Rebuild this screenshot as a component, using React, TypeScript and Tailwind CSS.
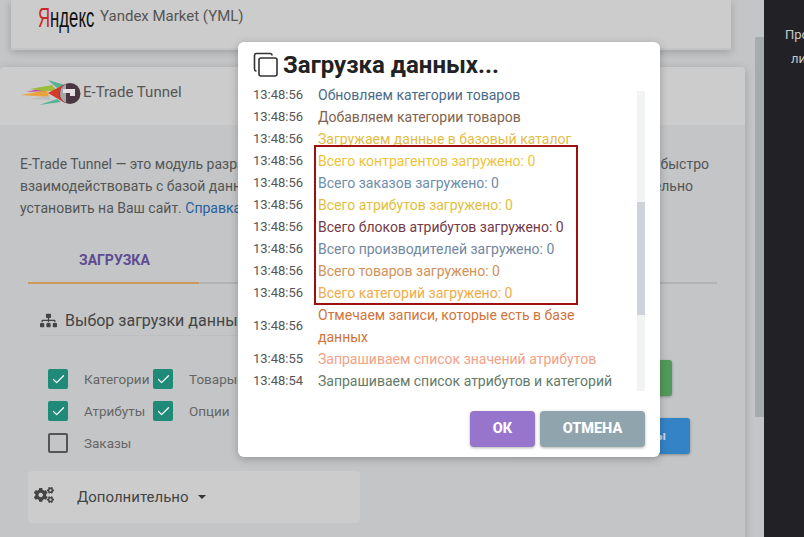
import { Check } from "lucide-react";
import { FaCogs, FaSitemap } from "react-icons/fa";

const logRows = [
  { text: "Обновляем категории товаров", color: "text-[#4a6a88]" },
  { text: "Добавляем категории товаров", color: "text-[#7f634c]" },
  { text: "Загружаем данные в базовый каталог", color: "text-[#e3bd45]" },
  { text: "Всего контрагентов загружено: 0", color: "text-[#efc337]" },
  { text: "Всего заказов загружено: 0", color: "text-[#6d8dab]" },
  { text: "Всего атрибутов загружено: 0", color: "text-[#e2c03e]" },
  { text: "Всего блоков атрибутов загружено: 0", color: "text-[#743a46]" },
  { text: "Всего производителей загружено: 0", color: "text-[#7287a1]" },
  { text: "Всего товаров загружено: 0", color: "text-[#d19158]" },
  { text: "Всего категорий загружено: 0", color: "text-[#f1ab4a]" },
  { text: "Отмечаем записи, которые есть в базе данных", color: "text-[#d0743a]" },
  { text: "Запрашиваем список значений атрибутов", color: "text-[#f4a185]", time: "13:48:55" },
  { text: "Запрашиваем список атрибутов и категорий", color: "text-[#637a68]", time: "13:48:54" },
];

function Box({ label, checked, w }: { label: string; checked?: boolean; w: string }) {
  return (
    <div className={`flex items-center h-[32px] ${w}`}>
      {checked ? (
        <span className="flex items-center justify-center w-5 h-5 rounded-[2px] bg-[#1f8a78] text-white">
          <Check size={15} strokeWidth={2} />
        </span>
      ) : (
        <span className="w-5 h-5 rounded-[2px] border-2 border-[#555]" />
      )}
      <span className="ml-4 text-[13.5px] text-[#666]">{label}</span>
    </div>
  );
}

function RocketLogo() {
  return (
    <svg width="60" height="26" viewBox="0 0 60 26" className="shrink-0">
      <path d="M0 15 L26 10 L28 17 Z" fill="#e8a33c" />
      <path d="M5 12 L22 8 L26 11 Z" fill="#c4479c" />
      <path d="M9 9 L31 5 L36 11 L22 11 Z" fill="#9dbb3f" />
      <path d="M8 19 L28 16 L30 20 Z" fill="#bdbdbd" />
      <path d="M18 25 L36 19 L40 22 Z" fill="#55b394" />
      <path d="M27 0 L44 5 L36 8 Z" fill="#55b394" />
      <path d="M27 13 L44 4 L39 13 L44 23 Z" fill="#d6382b" />
      <circle cx="49" cy="13.500" r="10.500" fill="#4a3742" />
      <path d="M39 13.500 A10.500 10.500 0 0 1 45 4 L45 23 A10.500 10.500 0 0 1 39 13.500 Z" fill="#a9a6a8" />
      <path d="M42 9 H54 V16 H49 V13 H42 Z" fill="#e4e0e2" />
    </svg>
  );
}

function CopyIcon() {
  return (
    <svg width="25" height="25" viewBox="0 0 25 25" fill="none" stroke="#333" strokeWidth="1.6" className="shrink-0">
      <path d="M3.500 19 C2.500 19 1.500 18 1.500 17 V3.500 C1.500 2.500 2.500 1.500 3.500 1.500 H17 C18 1.500 19 2.500 19 3.500" />
      <rect x="6" y="6" width="18" height="18" rx="2" />
    </svg>
  );
}

export default function App() {
  return (
    <div className="relative h-[537px] w-[804px] overflow-hidden bg-[#c3c5c7] font-['Roboto',sans-serif]">
      <div className="flex h-full">
        <div className="w-[745px] shrink-0">
          <div className="mx-[11px] w-[720px] h-[50px] bg-[#cccccc] border-b-2 border-[#c4c4c4] shadow-[0_2px_8px_rgba(0,0,0,0.2)] flex items-center pl-[27px] pb-[15px]">
            <span className="inline-block mt-[4px] w-[56px] text-[27px] leading-none font-['Liberation_Sans',sans-serif] text-[#111] origin-left scale-x-[0.62] whitespace-nowrap">
              <span className="text-[#c62a22]">Я</span>ндекс
            </span>
            <span className="ml-[6px] text-[15px] text-[#555]">Yandex Market (YML)</span>
          </div>

          <div className="mt-[17px] h-[480px] rounded-t-[4px] shadow-[0_2px_10px_rgba(0,0,0,0.2)]">
            <div className="h-[58px] bg-[#cccccc] rounded-t-[4px] flex items-center pl-[21px] pb-[7px]">
              <RocketLogo />
              <span className="ml-[2px] text-[15px] text-[#555]">E-Trade Tunnel</span>
            </div>
            <div className="px-5 pt-[28px]">
              <p className="text-[14px] leading-[22px] text-[#555] whitespace-nowrap">
                <span className="flex justify-between w-[689px]">
                  <span>E-Trade Tunnel — это модуль разработанный для того,</span>
                  <span>быстро</span>
                </span>
                <span className="flex justify-between w-[673px]">
                  <span>взаимодействовать с базой данных</span>
                  <span>ельно</span>
                </span>
                <span className="block">
                  установить на Ваш сайт. <span className="text-[#2a5f9e]">Справка</span>
                </span>
              </p>
            </div>

            <div className="mx-7 mt-[18px] flex h-[47px] border-b-2 border-[#b3b3b3]">
              <div className="w-[171px] h-[47px] shrink-0 border-b-2 border-[#c99a5b] pl-[51px] pt-[11px]">
                <span className="text-[14px] font-bold text-[#5e4b92]">ЗАГРУЗКА</span>
              </div>
            </div>

            <div className="flex">
              <div className="w-[332px] ml-7 shrink-0">
                <div className="mt-[25px] flex items-center h-[27px] mx-[12px] border-b border-[#bdbfc1] pb-[3px]">
                  <FaSitemap size={17} className="text-[#444]" />
                  <span className="ml-2 text-[16px] text-[#444] whitespace-nowrap">Выбор загрузки данных</span>
                </div>
                <div className="mt-[27px] ml-5">
                  <div className="flex">
                    <Box label="Категории" checked w="w-[105px]" />
                    <Box label="Товары" checked w="w-[105px]" />
                  </div>
                  <div className="flex">
                    <Box label="Атрибуты" checked w="w-[105px]" />
                    <Box label="Опции" checked w="w-[105px]" />
                  </div>
                  <Box label="Заказы" w="w-[105px]" />
                </div>
                <div className="mt-[12px] h-[52px] rounded-[4px] bg-[#cccccc] flex items-center pl-[7px]">
                  <FaCogs size={20} className="text-[#444] -mt-[4px] -ml-[1px]" />
                  <span className="ml-[23px] text-[15px] text-[#444]">Дополнительно</span>
                  <span className="ml-[9px] w-0 h-0 border-x-[4px] border-x-transparent border-t-[4px] border-t-[#333]" />
                </div>
              </div>
              <div className="flex-1 relative">
                <button className="absolute left-[200px] top-[76px] w-[112px] h-9 rounded-[3px] bg-[#529a5a] shadow-[0_1px_3px_rgba(0,0,0,0.3)]" />
                <button className="absolute left-[150px] top-[134px] w-[180px] h-9 rounded-[3px] bg-[#3483c6] shadow-[0_1px_3px_rgba(0,0,0,0.3)] text-[13px] font-bold text-[#c9d8e8] text-right pr-[24px] whitespace-nowrap">
                  Загрузить товары
                </button>
              </div>
            </div>
          </div>
        </div>

        <div className="ml-[10px] w-[9px] mt-[37px] h-[380px] bg-[#a6acae] shrink-0" />

        <div className="flex-1 bg-[#222226] pl-[21px] pt-[23px] text-[13px] leading-[24px] text-[#c8c8c8] overflow-hidden whitespace-nowrap">
          <div>Про</div>
          <div className="pl-[6px]">ли</div>
        </div>
      </div>

      <div className="absolute left-[238px] top-[42px] w-[422px] h-[415px] rounded-[6px] bg-white shadow-[0_2px_8px_rgba(0,0,0,0.25)] px-[15px]">
        <div className="flex items-center h-[46px] pb-[1px]">
          <CopyIcon />
          <h1 className="ml-[5px] text-[24px] font-bold text-[#222]">Загрузка данных...</h1>
        </div>
        <div className="relative h-[303px] overflow-hidden">
          <div className="-mt-[4px]">
            {logRows.map((row, i) => (
              <div key={i} className="flex items-center min-h-[22px] pr-[30px]">
                <span className="w-[65px] shrink-0 text-[13px] text-[#555]">{row.time ?? "13:48:56"}</span>
                <span className={`text-[14px] leading-[22px] w-[300px] ${row.color}`}>{row.text}</span>
              </div>
            ))}
          </div>
          <div className="absolute right-0 top-[3px] bottom-0 w-2 bg-[#f1f3f5]">
            <div className="mt-[111px] h-[113px] bg-[#cdd3d8]" />
          </div>
          <div className="absolute left-[61px] top-[57px] w-[264px] h-[160px] border-2 border-[#9c1010]" />
        </div>
        <div className="mt-[20px] flex justify-end gap-[5px]">
          <button className="w-[65px] h-9 rounded-[4px] bg-[#9775cd] text-[14.5px] font-extrabold text-white shadow-[0_1px_3px_rgba(0,0,0,0.3)]">ОК</button>
          <button className="w-[105px] h-9 rounded-[4px] bg-[#90a4ae] text-[14.5px] font-extrabold text-white shadow-[0_1px_3px_rgba(0,0,0,0.3)]">ОТМЕНА</button>
        </div>
      </div>
    </div>
  );
}
